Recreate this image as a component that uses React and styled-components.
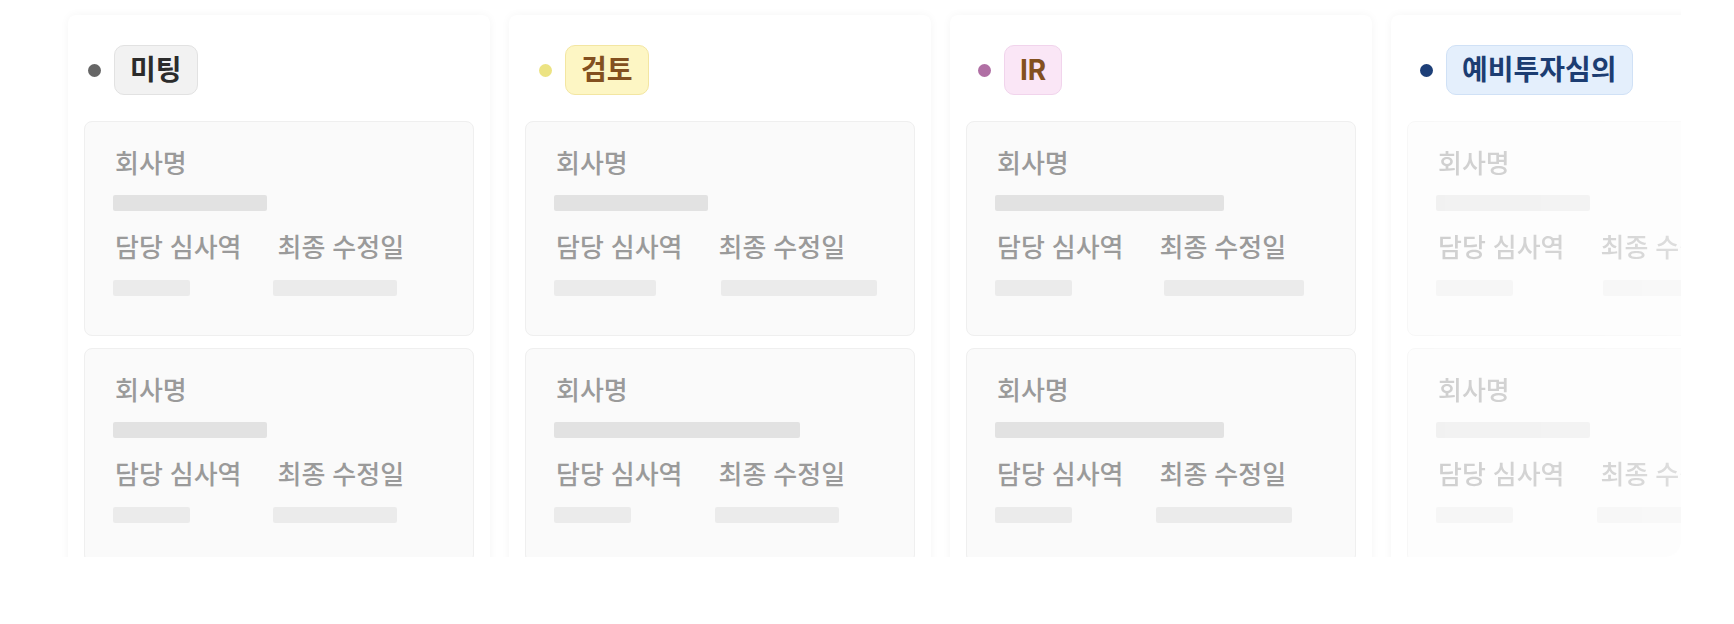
import React from 'react';
import styled, { createGlobalStyle } from 'styled-components';

const GlobalStyle = createGlobalStyle`
  html, body {
    margin: 0;
    padding: 0;
    background: #ffffff;
  }
  body {
    font-family: Inter, "Noto Sans CJK KR", "Noto Sans", sans-serif;
  }
`;

// 보드 미리보기 영역. 오른쪽/아래는 잘려서 보인다
const Viewport = styled.div`
  box-sizing: border-box;
  width: 1681px;
  height: 557px;
  padding: 15px 0 0 68px;
  overflow: hidden;
  border-radius: 0 0 16px 0;
`;

const Board = styled.div`
  display: flex;
  gap: 19px;
  align-items: flex-start;
`;

const Column = styled.section`
  box-sizing: border-box;
  flex: 0 0 422px;
  height: 600px;
  padding: 30px 16px 0;
  background: #ffffff;
  border-radius: 8px;
  box-shadow: 0 0 10px rgba(0, 0, 0, 0.045);
`;

const ColumnHeader = styled.div`
  display: flex;
  align-items: center;
  gap: 13px;
  padding-left: ${(props) => props.indent}px;
  margin-bottom: 26px;
`;

const Dot = styled.span`
  width: 13px;
  height: 13px;
  border-radius: 50%;
  background: ${(props) => props.color};
`;

const Badge = styled.span`
  display: inline-block;
  padding: 6px 15px;
  border: 1.5px solid ${(props) => props.border};
  border-radius: 10px;
  background: ${(props) => props.bg};
  color: ${(props) => props.fg};
  font-size: 28px;
  line-height: 36px;
  font-weight: 700;
`;

const CardList = styled.div`
  display: flex;
  flex-direction: column;
  gap: 12px;
  ${(props) =>
    props.faded &&
    `
    -webkit-mask-image: linear-gradient(to right, rgba(0,0,0,0.48), rgba(0,0,0,0.4) 55%, rgba(0,0,0,0.18));
    mask-image: linear-gradient(to right, rgba(0,0,0,0.48), rgba(0,0,0,0.4) 55%, rgba(0,0,0,0.18));
  `}
`;

const Card = styled.div`
  box-sizing: border-box;
  width: 390px;
  height: 215px;
  padding: 24px 28px 0;
  background: #fafafa;
  border: 1px solid #efefef;
  border-radius: 8px;
  flex-shrink: 0;
`;

const Label = styled.div`
  color: #9a9a9a;
  font-size: 26px;
  line-height: 36px;
  font-weight: 500;
  padding-left: 2px;
  white-space: nowrap;
`;

const Skeleton = styled.div`
  height: 16px;
  border-radius: 2px;
  background: ${(props) => (props.strong ? '#e2e2e2' : '#ebebeb')};
`;

const NameBlock = styled.div`
  display: flex;
  flex-direction: column;
  gap: 13px;
  margin-bottom: 19px;
`;

const MetaRow = styled.div`
  display: flex;
  gap: 34px;
`;

const MetaItem = styled.div`
  display: flex;
  flex-direction: column;
  gap: 14px;
`;

const columns = [
  {
    title: '미팅',
    dot: '#666666',
    bg: '#f2f2f2',
    border: '#e2e2e2',
    fg: '#2b2b2b',
    indent: 4,
    cards: [
      { name: 154, reviewer: 77, date: 124, shift: -3 },
      { name: 154, reviewer: 77, date: 124, shift: -3 },
    ],
  },
  {
    title: '검토',
    dot: '#ece383',
    bg: '#fdf6c4',
    border: '#f3e6a2',
    fg: '#83501f',
    indent: 14,
    cards: [
      { name: 154, reviewer: 102, date: 156, shift: 4 },
      { name: 246, reviewer: 77, date: 124, shift: -2 },
    ],
  },
  {
    title: 'IR',
    dot: '#b06fa4',
    bg: '#fae6f6',
    border: '#f1d4ec',
    fg: '#83501f',
    indent: 12,
    cards: [
      { name: 229, reviewer: 77, date: 140, shift: 6 },
      { name: 229, reviewer: 77, date: 136, shift: -2 },
    ],
  },
  {
    title: '예비투자심의',
    dot: '#1d3f78',
    bg: '#e4effc',
    border: '#d0e1f6',
    fg: '#1c3d72',
    indent: 13,
    faded: true,
    cards: [
      { name: 154, reviewer: 77, date: 140, shift: 4 },
      { name: 154, reviewer: 77, date: 140, shift: -2 },
    ],
  },
];

function DealCard({ card }) {
  return (
    <Card>
      <NameBlock>
        <Label>회사명</Label>
        <Skeleton strong style={{ width: card.name }} />
      </NameBlock>
      <MetaRow>
        <MetaItem>
          <Label>담당 심사역</Label>
          <Skeleton style={{ width: card.reviewer }} />
        </MetaItem>
        <MetaItem>
          <Label>최종 수정일</Label>
          <Skeleton style={{ width: card.date, marginLeft: card.shift }} />
        </MetaItem>
      </MetaRow>
    </Card>
  );
}

export default function App() {
  return (
    <>
      <GlobalStyle />
      <Viewport>
        <Board>
          {columns.map((col) => (
            <Column key={col.title}>
              <ColumnHeader indent={col.indent}>
                <Dot color={col.dot} />
                <Badge bg={col.bg} border={col.border} fg={col.fg}>
                  {col.title}
                </Badge>
              </ColumnHeader>
              <CardList faded={col.faded}>
                {col.cards.map((card, i) => (
                  <DealCard key={i} card={card} />
                ))}
              </CardList>
            </Column>
          ))}
        </Board>
      </Viewport>
    </>
  );
}
